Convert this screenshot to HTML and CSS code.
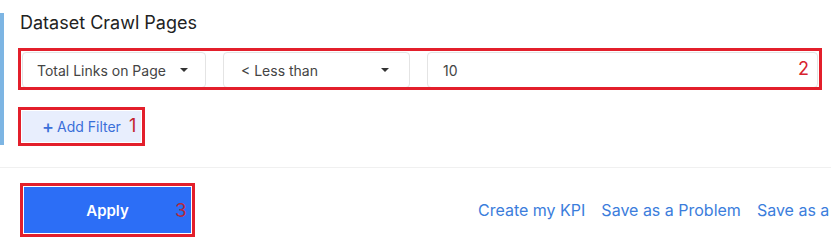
FILE: index.html
```html
<!DOCTYPE html>
<html>
<head>
<meta charset="utf-8">
<link rel="stylesheet" href="styles.css">
</head>
<body>
<section class="panel">
  <h2 class="title">Dataset Crawl Pages</h2>
  <div class="filters-row">
    <div class="field field-select field-first">
      <span>Total Links on Page</span><span class="caret"></span>
    </div>
    <div class="field field-select field-second">
      <span>&lt; Less than</span><span class="caret"></span>
    </div>
    <div class="field field-input">
      <span>10</span>
    </div>
    <span class="mark mark-2">2</span>
  </div>
  <div class="add-filter">
    <span class="plus">+</span><span class="add-label">Add Filter</span><span class="mark mark-1">1</span>
  </div>
</section>
<hr class="divider">
<footer class="actions">
  <button class="apply">Apply<span class="mark mark-3">3</span></button>
  <nav class="links">
    <a class="link">Create my KPI</a>
    <a class="link">Save as a Problem</a>
    <a class="link">Save as a</a>
  </nav>
</footer>
</body>
</html>
```

FILE: styles.css
```css
html, body {
  margin: 0;
  padding: 0;
  background: #ffffff;
  overflow: hidden;
  width: 831px;
  height: 246px;
  font-family: Inter, "Noto Sans", sans-serif;
}

.panel {
  margin-top: 13px;
  border-left: 4px solid #7db5e3;
  padding: 0 0 3px 16px;
  height: 129px;
}

.title {
  margin: 0;
  font-size: 18px;
  line-height: 20px;
  font-weight: 400;
  color: #222;
}

.filters-row {
  position: relative;
  margin: 19px 0 0 2px;
  width: 796px;
  height: 34px;
  display: flex;
  gap: 17px;
  outline: 3px solid #e31f2b;
  outline-offset: 1px;
}

.field {
  box-sizing: border-box;
  height: 36px;
  border: 1px solid #e4e4e4;
  border-radius: 4px;
  display: flex;
  align-items: center;
  font-size: 14px;
  color: #444;
  background: #fff;
}

.field-select {
  justify-content: space-between;
  padding: 0 17px 0 14px;
}

.field-first { width: 184px; }
.field-second { width: 187px; padding-left: 17px; padding-right: 20px; }
.field-input { flex: 1; padding-left: 15px; }

.caret {
  width: 0;
  height: 0;
  border-left: 4px solid transparent;
  border-right: 4px solid transparent;
  border-top: 4px solid #333;
}

.mark {
  font-family: Inter, "Noto Sans", sans-serif;
  font-weight: 400;
  color: #d8232e;
  font-size: 18px;
}

.mark-2 {
  position: absolute;
  right: 9px;
  top: 7px;
  line-height: 20px;
}

.add-filter {
  margin: 25px 0 0 2px;
  width: 119px;
  height: 31px;
  box-sizing: border-box;
  background: #e8eefd;
  display: flex;
  align-items: center;
  padding-left: 20px;
  font-size: 14px;
  color: #3a6fd9;
  outline: 3px solid #e31f2b;
  outline-offset: 1px;
  position: relative;
}

.plus {
  font-size: 18px;
  font-weight: 500;
  margin-right: 3px;
  line-height: 1;
}

.mark-1 {
  position: absolute;
  left: 107px;
  top: 5px;
  line-height: 20px;
  color: #c3222c;
}

.divider {
  margin: 22px 0 0 0;
  border: 0;
  border-top: 1px solid #f0f0f0;
  height: 0;
}

.actions {
  display: flex;
  align-items: center;
  margin-top: 19px;
}

.apply {
  position: relative;
  margin-left: 24px;
  width: 167px;
  height: 46px;
  border: 0;
  background: #2c6ef6;
  color: #fff;
  font-family: Inter, "Noto Sans", sans-serif;
  font-size: 15px;
  font-weight: 600;
  outline: 3px solid #e31f2b;
  outline-offset: 1px;
  padding: 0;
  flex-shrink: 0;
}

.mark-3 {
  position: absolute;
  left: 151px;
  top: 14px;
  line-height: 20px;
  font-size: 19px;
  color: #b42a3f;
}

.links {
  display: flex;
  gap: 16px;
  margin-left: 287px;
  flex-shrink: 0;
  white-space: nowrap;
}

.link {
  font-size: 16px;
  color: #3b7ddc;
  cursor: pointer;
}
```
